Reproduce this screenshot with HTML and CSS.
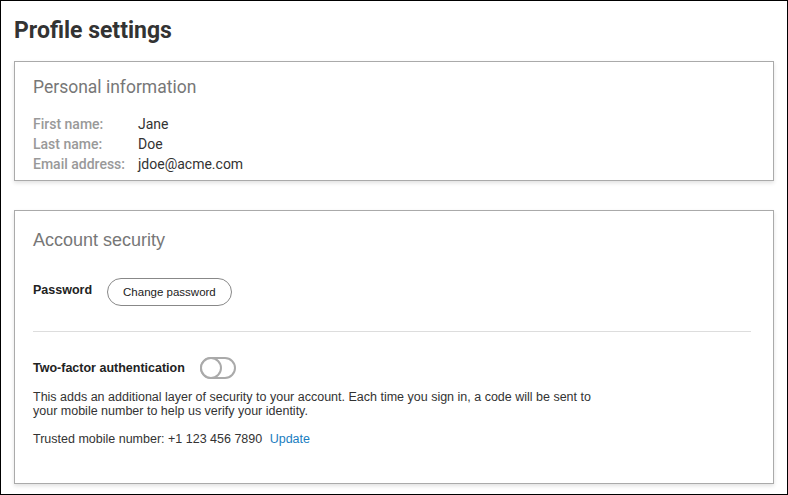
FILE: index.html
```html
<!DOCTYPE html>
<html lang="en">
<head>
<meta charset="utf-8">
<title>Profile settings</title>
<link rel="stylesheet" href="styles.css">
</head>
<body>
<div class="page">
  <h1 class="page-title">Profile settings</h1>

  <section class="card card-personal">
    <h2 class="card-title roboto">Personal information</h2>
    <dl class="info">
      <dt>First name:</dt><dd>Jane</dd>
      <dt>Last name:</dt><dd>Doe</dd>
      <dt>Email address:</dt><dd>jdoe@acme.com</dd>
    </dl>
  </section>

  <section class="card card-security">
    <h2 class="card-title arial">Account security</h2>
    <div class="row password-row">
      <span class="row-label">Password</span>
      <button class="btn-outline" type="button">Change password</button>
    </div>
    <hr class="divider">
    <div class="row tfa-row">
      <span class="row-label">Two-factor authentication</span>
      <span class="toggle" role="switch" aria-checked="false">
        <svg width="36" height="22" viewBox="0 0 36 22">
          <rect x="1" y="1" width="34" height="20" rx="10" fill="#fff" stroke="#aaa" stroke-width="2"/>
          <circle cx="11" cy="11" r="10" fill="#fff" stroke="#aaa" stroke-width="2"/>
        </svg>
      </span>
    </div>
    <p class="tfa-desc">This adds an additional layer of security to your account. Each time you sign in, a code will be sent to your mobile number to help us verify your identity.</p>
    <p class="tfa-number">Trusted mobile number: +1 123 456 7890 <a class="link" href="#">Update</a></p>
  </section>
</div>
</body>
</html>
```

FILE: styles.css
```css
* { box-sizing: border-box; }
html, body { margin: 0; padding: 0; height: 100%; }
body {
  background: #fff;
  font-family: "Liberation Sans", Arial, sans-serif;
  color: #333;
}
.page {
  height: 100%;
  border: 1px solid #000;
  padding: 0 13px;
  display: flex;
  flex-direction: column;
}
.page-title {
  font-family: Roboto, "Liberation Sans", sans-serif;
  font-weight: 700;
  font-size: 23px;
  line-height: 26px;
  color: #333;
  margin: 17px 0 0 0;
}
.card {
  border: 1px solid #aaa;
  box-shadow: 0 2px 4px rgba(0,0,0,0.12);
  background: #fff;
  padding-left: 18px;
  padding-right: 22px;
}
.card-personal {
  margin-top: 17px;
  padding-top: 15px;
  padding-bottom: 6px;
}
.card-security {
  margin-top: 29px;
  padding-top: 19px;
  padding-bottom: 37px;
}
.card-title {
  margin: 0;
  font-weight: 400;
  line-height: 21px;
  color: #777;
}
.card-title.roboto { font-family: Roboto, "Liberation Sans", sans-serif; font-size: 17.5px; }
.card-title.arial { font-family: "Liberation Sans", Arial, sans-serif; font-size: 18px; }

.info {
  margin: 16px 0 0 0;
  display: grid;
  grid-template-columns: 105px 1fr;
  font-family: Roboto, "Liberation Sans", sans-serif;
  font-size: 14px;
  line-height: 20px;
}
.info dt { color: #999; font-weight: 500; }
.info dd { margin: 0; color: #333; }

.row {
  display: flex;
  align-items: center;
}
.row-label {
  font-weight: 700;
  font-size: 12.5px;
  color: #222;
}
.password-row {
  margin-top: 27px;
  gap: 15px;
}
.password-row .row-label { margin-bottom: 4px; }
.btn-outline {
  font-family: "Liberation Sans", Arial, sans-serif;
  font-size: 11.5px;
  line-height: 14px;
  padding: 6px 15px;
  border: 1px solid #888;
  border-radius: 14px;
  background: #fff;
  color: #222;
}
.divider {
  border: 0;
  border-top: 1px solid #ddd;
  margin: 25px 0 0 0;
  height: 0;
}
.tfa-row {
  margin-top: 25px;
  gap: 15px;
  height: 22px;
}
.toggle { display: block; width: 36px; height: 22px; }
.toggle svg { display: block; }
.tfa-desc, .tfa-number {
  font-size: 12.5px;
  line-height: 14.4px;
  color: #333;
  margin: 0;
}
.tfa-desc { margin-top: 11px; max-width: 575px; }
.tfa-number { margin-top: 13px; }
.link { color: #1a7dc0; text-decoration: none; margin-left: 4px; }
```
